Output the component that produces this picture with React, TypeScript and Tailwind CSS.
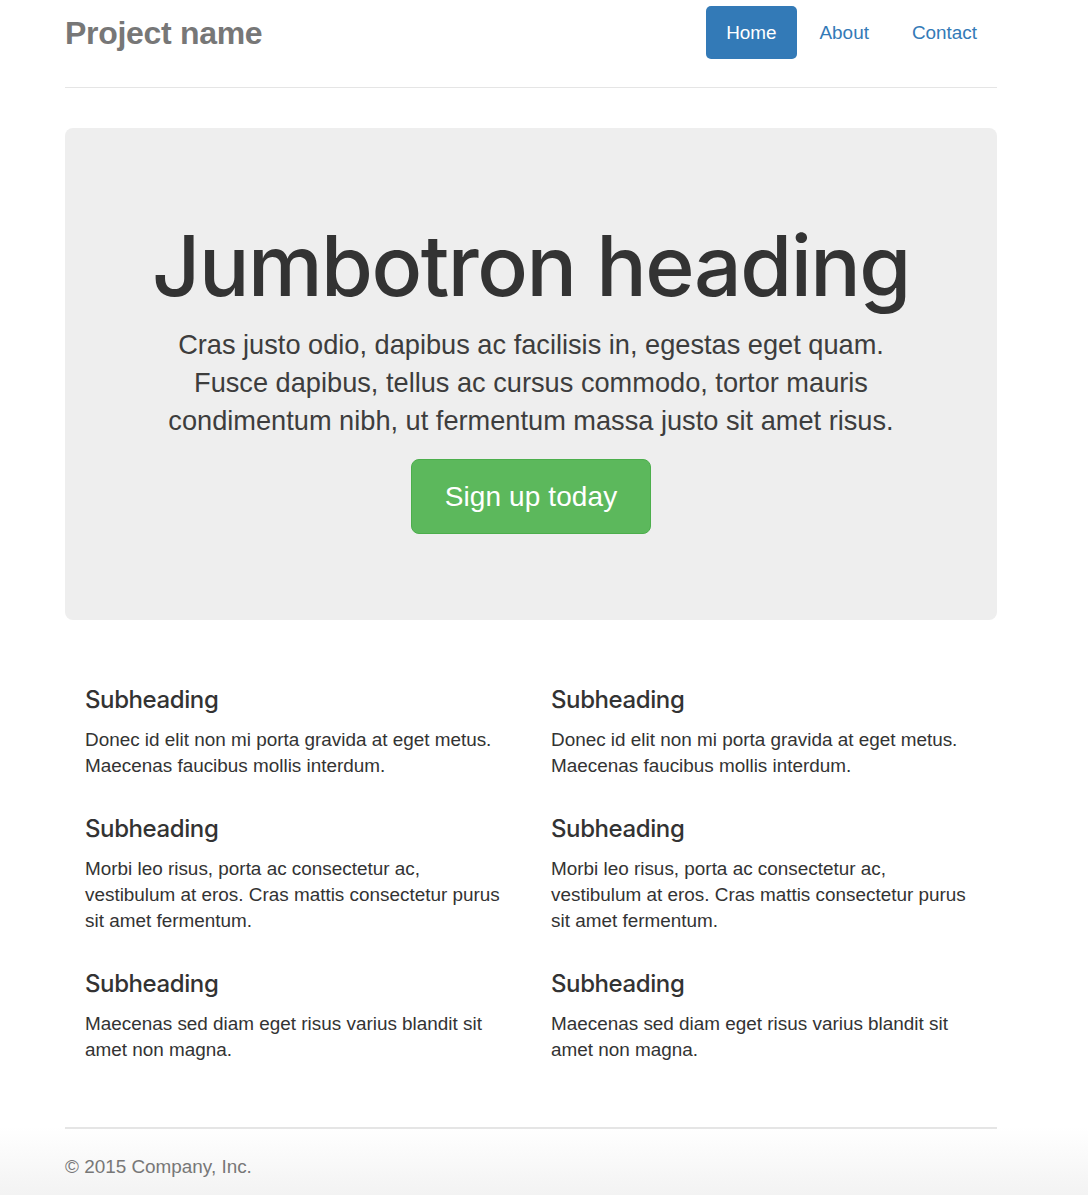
const marketing = [
  [
    {
      title: "Subheading",
      body: "Donec id elit non mi porta gravida at eget metus. Maecenas faucibus mollis interdum.",
    },
    {
      title: "Subheading",
      body: "Morbi leo risus, porta ac consectetur ac, vestibulum at eros. Cras mattis consectetur purus sit amet fermentum.",
    },
    {
      title: "Subheading",
      body: "Maecenas sed diam eget risus varius blandit sit amet non magna.",
    },
  ],
  [
    {
      title: "Subheading",
      body: "Donec id elit non mi porta gravida at eget metus. Maecenas faucibus mollis interdum.",
    },
    {
      title: "Subheading",
      body: "Morbi leo risus, porta ac consectetur ac, vestibulum at eros. Cras mattis consectetur purus sit amet fermentum.",
    },
    {
      title: "Subheading",
      body: "Maecenas sed diam eget risus varius blandit sit amet non magna.",
    },
  ],
];

const Header = () => (
  <div className="flex items-center justify-between border-b border-[#e5e5e5] pt-[6px] pb-[28px]">
    <h3 className="h-[53px] pt-[2px] text-[32px] leading-[51px] font-bold text-[#777] tracking-[-0.3px]">
      Project name
    </h3>
    <nav className="flex gap-[3px]">
      <a className="h-[53px] px-[20px] pt-[2px] flex items-center rounded-[5px] bg-[#337ab7] text-white text-[18.9px]">
        Home
      </a>
      <a className="h-[53px] px-[20px] pt-[2px] flex items-center rounded-[5px] text-[#337ab7] text-[18.9px]">
        About
      </a>
      <a className="h-[53px] px-[20px] pt-[2px] flex items-center rounded-[5px] text-[#337ab7] text-[18.9px]">
        Contact
      </a>
    </nav>
  </div>
);

export default function App() {
  return (
    <div className="min-h-[1195px] bg-white text-[#333] font-['Liberation_Sans',Arial,sans-serif] flex flex-col">
      <div className="ml-[65px] w-[932px]">
        <Header />

        {/* Jumbotron */}
        <div className="mt-[40px] h-[492px] rounded-[8px] bg-[#eee] px-[80px] pt-[92px] text-center">
          <h1 className="font-['Inter',sans-serif] font-medium text-[84px] leading-[92px] tracking-[-1.5px]">
            Jumbotron heading
          </h1>
          <p className="mt-[14px] text-[27.2px] leading-[38px] text-[#3d3d3d]">
            Cras justo odio, dapibus ac facilisis in, egestas eget quam.
            <br />
            Fusce dapibus, tellus ac cursus commodo, tortor mauris
            <br />
            condimentum nibh, ut fermentum massa justo sit amet risus.
          </p>
          <div className="mt-[19px] flex justify-center">
            <a className="h-[75px] w-[240px] flex items-center justify-center rounded-[8px] border border-[#4cae4c] bg-[#5cb85c] text-white text-[28px] tracking-[0.1px]">
              Sign up today
            </a>
          </div>
        </div>

        {/* Marketing */}
        <div className="mt-[67px] grid grid-cols-2">
          {marketing.map((col, ci) => (
            <div key={ci} className="px-[20px] flex flex-col gap-[37px]">
              {col.map((item, i) => (
                <div key={i}>
                  <h4 className="font-['Inter',sans-serif] font-medium text-[24px] leading-[26px] tracking-[-0.4px]">
                    {item.title}
                  </h4>
                  <p className="mt-[14px] text-[18.9px] leading-[26px]">{item.body}</p>
                </div>
              ))}
            </div>
          ))}
        </div>
      </div>

      {/* Footer */}
      <div className="mt-[64px] flex-1 bg-gradient-to-b from-white to-[#f2f2f2]">
        <div className="ml-[65px] w-[932px] border-t-2 border-[#e5e5e5] pt-[25px] pb-[20px]">
          <p className="text-[18.9px] leading-[26px] text-[#777]">© 2015 Company, Inc.</p>
        </div>
      </div>
    </div>
  );
}
